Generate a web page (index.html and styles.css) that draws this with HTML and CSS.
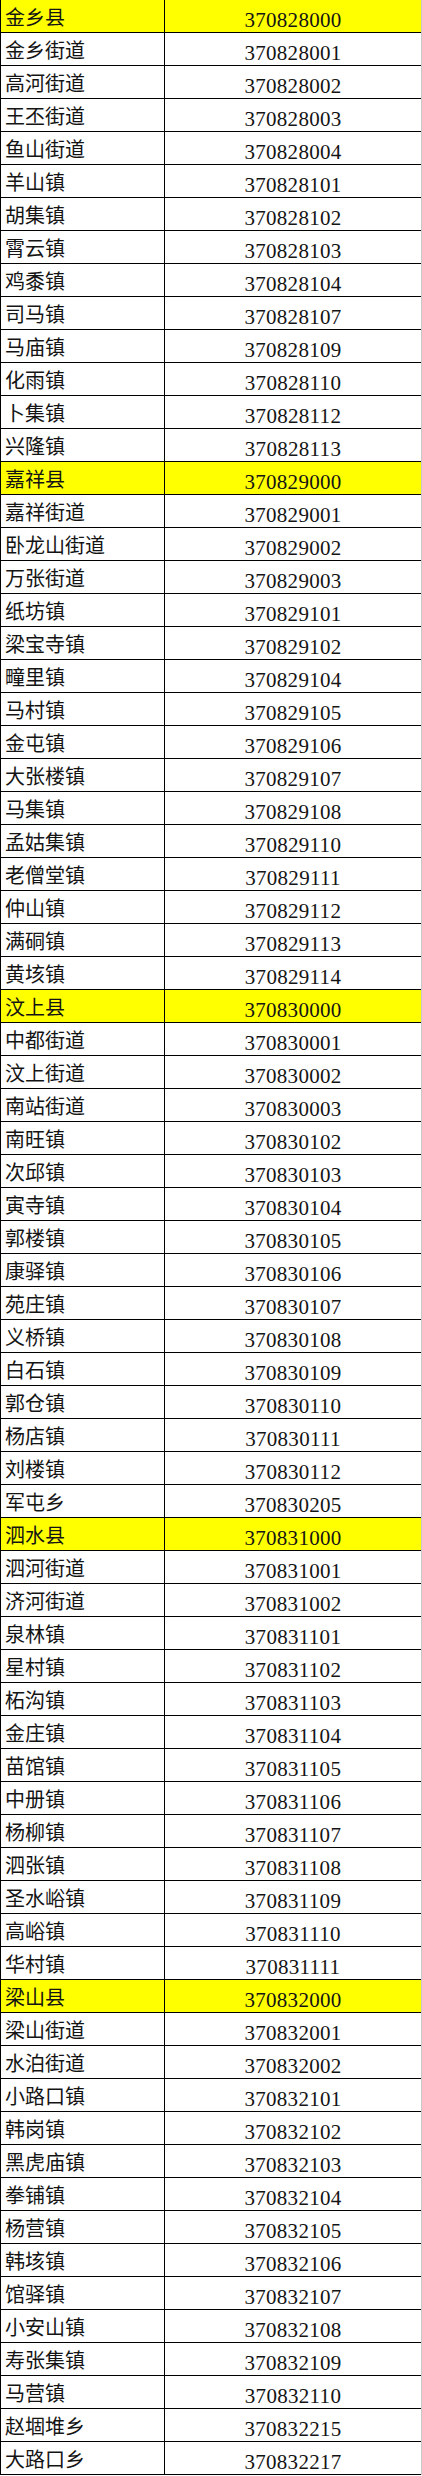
FILE: index.html
```html
<!DOCTYPE html>
<html lang="zh">
<head>
<meta charset="utf-8">
<title>行政区划代码</title>
<link rel="stylesheet" href="styles.css">
</head>
<body>
<div class="sheet">
<div class="row hl"><div class="name">金乡县</div><div class="code">370828000</div></div>
<div class="row"><div class="name">金乡街道</div><div class="code">370828001</div></div>
<div class="row"><div class="name">高河街道</div><div class="code">370828002</div></div>
<div class="row"><div class="name">王丕街道</div><div class="code">370828003</div></div>
<div class="row"><div class="name">鱼山街道</div><div class="code">370828004</div></div>
<div class="row"><div class="name">羊山镇</div><div class="code">370828101</div></div>
<div class="row"><div class="name">胡集镇</div><div class="code">370828102</div></div>
<div class="row"><div class="name">霄云镇</div><div class="code">370828103</div></div>
<div class="row"><div class="name">鸡黍镇</div><div class="code">370828104</div></div>
<div class="row"><div class="name">司马镇</div><div class="code">370828107</div></div>
<div class="row"><div class="name">马庙镇</div><div class="code">370828109</div></div>
<div class="row"><div class="name">化雨镇</div><div class="code">370828110</div></div>
<div class="row"><div class="name">卜集镇</div><div class="code">370828112</div></div>
<div class="row"><div class="name">兴隆镇</div><div class="code">370828113</div></div>
<div class="row hl"><div class="name">嘉祥县</div><div class="code">370829000</div></div>
<div class="row"><div class="name">嘉祥街道</div><div class="code">370829001</div></div>
<div class="row"><div class="name">卧龙山街道</div><div class="code">370829002</div></div>
<div class="row"><div class="name">万张街道</div><div class="code">370829003</div></div>
<div class="row"><div class="name">纸坊镇</div><div class="code">370829101</div></div>
<div class="row"><div class="name">梁宝寺镇</div><div class="code">370829102</div></div>
<div class="row"><div class="name">疃里镇</div><div class="code">370829104</div></div>
<div class="row"><div class="name">马村镇</div><div class="code">370829105</div></div>
<div class="row"><div class="name">金屯镇</div><div class="code">370829106</div></div>
<div class="row"><div class="name">大张楼镇</div><div class="code">370829107</div></div>
<div class="row"><div class="name">马集镇</div><div class="code">370829108</div></div>
<div class="row"><div class="name">孟姑集镇</div><div class="code">370829110</div></div>
<div class="row"><div class="name">老僧堂镇</div><div class="code">370829111</div></div>
<div class="row"><div class="name">仲山镇</div><div class="code">370829112</div></div>
<div class="row"><div class="name">满硐镇</div><div class="code">370829113</div></div>
<div class="row"><div class="name">黄垓镇</div><div class="code">370829114</div></div>
<div class="row hl"><div class="name">汶上县</div><div class="code">370830000</div></div>
<div class="row"><div class="name">中都街道</div><div class="code">370830001</div></div>
<div class="row"><div class="name">汶上街道</div><div class="code">370830002</div></div>
<div class="row"><div class="name">南站街道</div><div class="code">370830003</div></div>
<div class="row"><div class="name">南旺镇</div><div class="code">370830102</div></div>
<div class="row"><div class="name">次邱镇</div><div class="code">370830103</div></div>
<div class="row"><div class="name">寅寺镇</div><div class="code">370830104</div></div>
<div class="row"><div class="name">郭楼镇</div><div class="code">370830105</div></div>
<div class="row"><div class="name">康驿镇</div><div class="code">370830106</div></div>
<div class="row"><div class="name">苑庄镇</div><div class="code">370830107</div></div>
<div class="row"><div class="name">义桥镇</div><div class="code">370830108</div></div>
<div class="row"><div class="name">白石镇</div><div class="code">370830109</div></div>
<div class="row"><div class="name">郭仓镇</div><div class="code">370830110</div></div>
<div class="row"><div class="name">杨店镇</div><div class="code">370830111</div></div>
<div class="row"><div class="name">刘楼镇</div><div class="code">370830112</div></div>
<div class="row"><div class="name">军屯乡</div><div class="code">370830205</div></div>
<div class="row hl"><div class="name">泗水县</div><div class="code">370831000</div></div>
<div class="row"><div class="name">泗河街道</div><div class="code">370831001</div></div>
<div class="row"><div class="name">济河街道</div><div class="code">370831002</div></div>
<div class="row"><div class="name">泉林镇</div><div class="code">370831101</div></div>
<div class="row"><div class="name">星村镇</div><div class="code">370831102</div></div>
<div class="row"><div class="name">柘沟镇</div><div class="code">370831103</div></div>
<div class="row"><div class="name">金庄镇</div><div class="code">370831104</div></div>
<div class="row"><div class="name">苗馆镇</div><div class="code">370831105</div></div>
<div class="row"><div class="name">中册镇</div><div class="code">370831106</div></div>
<div class="row"><div class="name">杨柳镇</div><div class="code">370831107</div></div>
<div class="row"><div class="name">泗张镇</div><div class="code">370831108</div></div>
<div class="row"><div class="name">圣水峪镇</div><div class="code">370831109</div></div>
<div class="row"><div class="name">高峪镇</div><div class="code">370831110</div></div>
<div class="row"><div class="name">华村镇</div><div class="code">370831111</div></div>
<div class="row hl"><div class="name">梁山县</div><div class="code">370832000</div></div>
<div class="row"><div class="name">梁山街道</div><div class="code">370832001</div></div>
<div class="row"><div class="name">水泊街道</div><div class="code">370832002</div></div>
<div class="row"><div class="name">小路口镇</div><div class="code">370832101</div></div>
<div class="row"><div class="name">韩岗镇</div><div class="code">370832102</div></div>
<div class="row"><div class="name">黑虎庙镇</div><div class="code">370832103</div></div>
<div class="row"><div class="name">拳铺镇</div><div class="code">370832104</div></div>
<div class="row"><div class="name">杨营镇</div><div class="code">370832105</div></div>
<div class="row"><div class="name">韩垓镇</div><div class="code">370832106</div></div>
<div class="row"><div class="name">馆驿镇</div><div class="code">370832107</div></div>
<div class="row"><div class="name">小安山镇</div><div class="code">370832108</div></div>
<div class="row"><div class="name">寿张集镇</div><div class="code">370832109</div></div>
<div class="row"><div class="name">马营镇</div><div class="code">370832110</div></div>
<div class="row"><div class="name">赵堌堆乡</div><div class="code">370832215</div></div>
<div class="row"><div class="name">大路口乡</div><div class="code">370832217</div></div>
</div>
</body>
</html>
```

FILE: styles.css
```css
html, body {
  margin: 0;
  padding: 0;
  background: #fff;
}

.sheet {
  width: 422px;
  box-sizing: border-box;
  border-left: 1px solid #000;
  border-right: 1px solid #c8c8c8;
  color: #141414;
}

.row {
  display: grid;
  grid-template-columns: 164px 256px;
  height: 33px;
  box-sizing: border-box;
  border-bottom: 1px solid #000;
}

.row.hl {
  background: #ffff00;
}

.name {
  box-sizing: border-box;
  border-right: 1px solid #000;
  padding: 2px 0 0 4px;
  font-family: "Noto Sans CJK SC", sans-serif;
  font-size: 20px;
  line-height: 30px;
  white-space: nowrap;
  overflow: hidden;
}

.code {
  box-sizing: border-box;
  padding-top: 8px;
  text-align: center;
  font-family: "Liberation Serif", serif;
  font-size: 21px;
  letter-spacing: 0.3px;
  line-height: 24px;
  white-space: nowrap;
}
```
